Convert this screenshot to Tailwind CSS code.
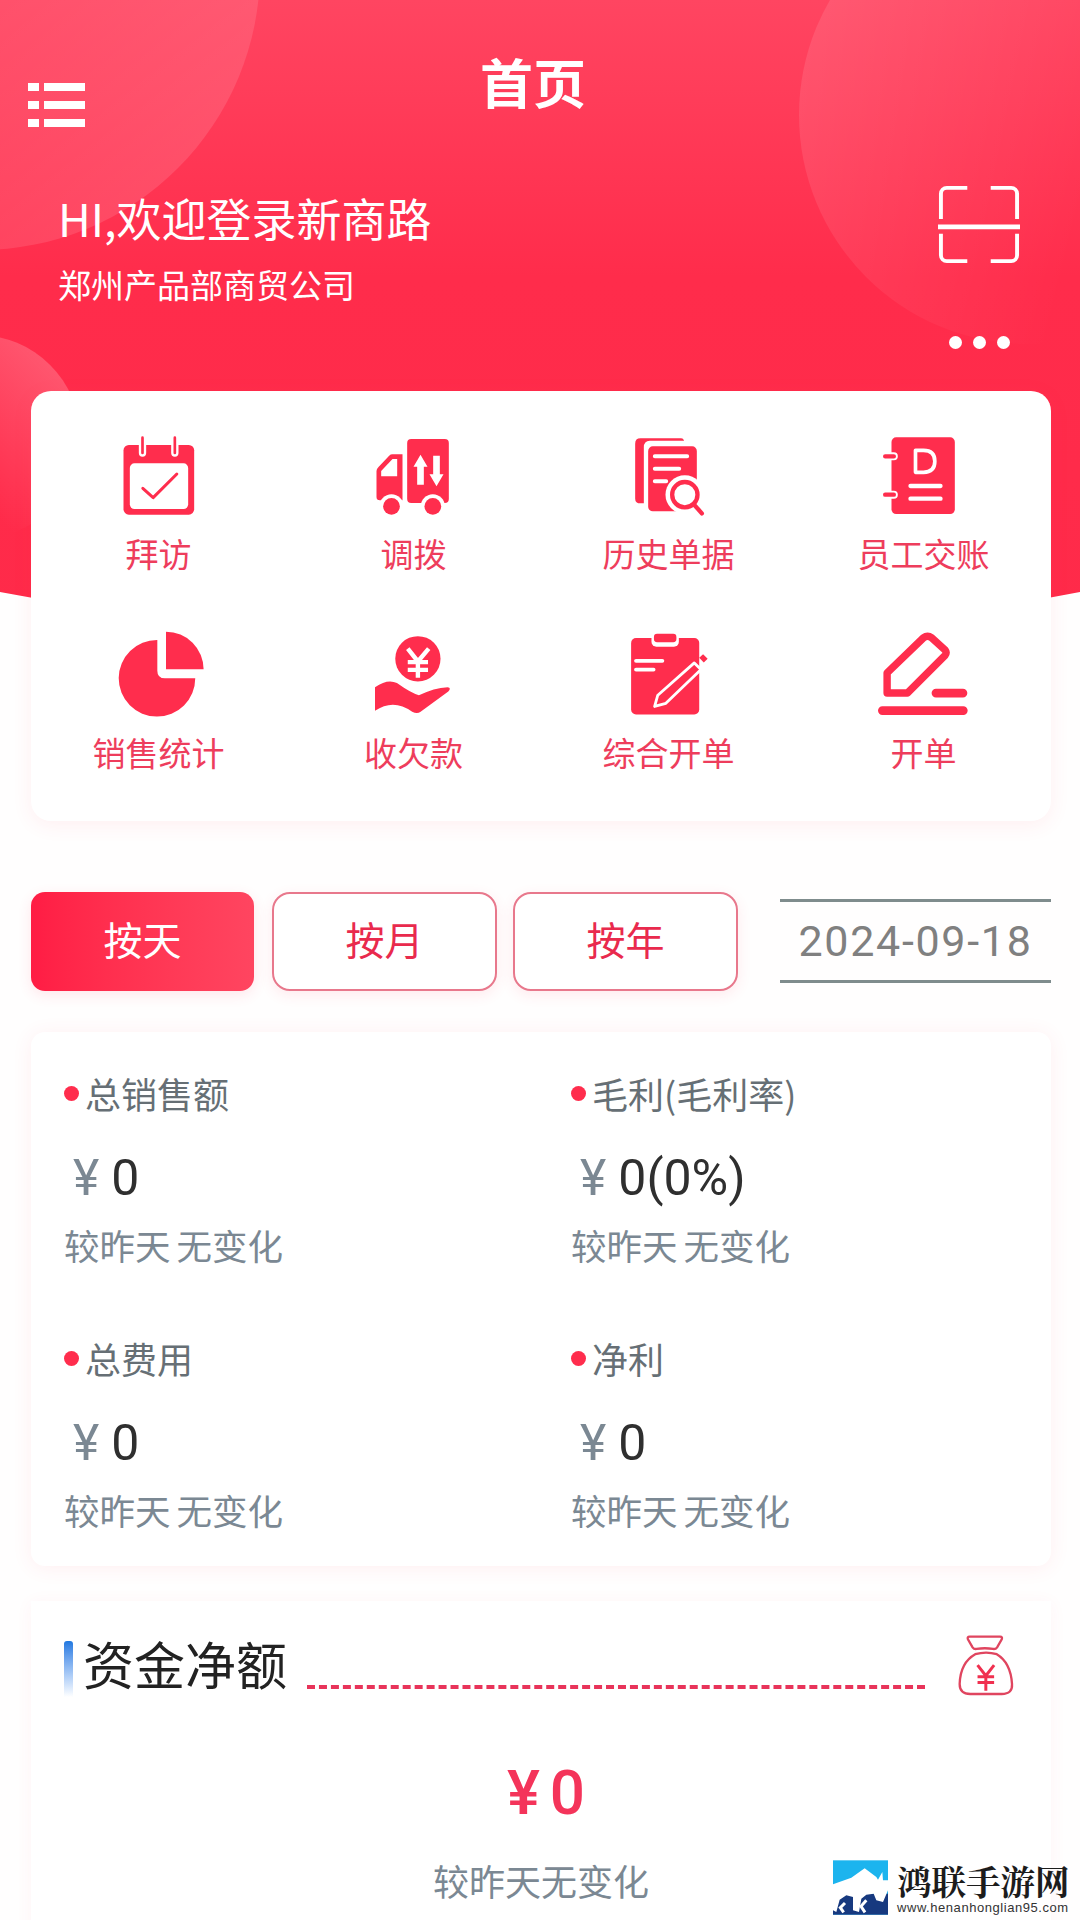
<!DOCTYPE html>
<html lang="zh-CN">
<head>
<meta charset="UTF-8" />
<title>首页</title>
<script src="https://cdn.jsdelivr.net/npm/@tailwindcss/browser@4"></script>
</head>
<body class="bg-white font-['Noto_Sans_CJK_SC','Noto_Sans',sans-serif]">
<div class="relative w-[1080px] h-[1920px] overflow-hidden bg-[#fffefe]">

  <!-- red header background with its soft circles -->
  <svg class="absolute left-0 top-0" width="1080" height="660" viewBox="0 0 1080 660">
    <defs>
      <linearGradient id="headerBg" x1="0" y1="0" x2="0" y2="1">
        <stop offset="0" stop-color="#ff4561" />
        <stop offset="0.42" stop-color="#ff2c4b" />
        <stop offset="1" stop-color="#ff2a49" />
      </linearGradient>
      <linearGradient id="circleLeft" x1="0" y1="0" x2="1" y2="1">
        <stop offset="0.2" stop-color="#fff" stop-opacity="0" />
        <stop offset="0.9" stop-color="#fff" stop-opacity="0.13" />
      </linearGradient>
      <linearGradient id="circleRight" x1="0" y1="0" x2="1" y2="0.25">
        <stop offset="0" stop-color="#fff" stop-opacity="0.12" />
        <stop offset="0.75" stop-color="#fff" stop-opacity="0" />
      </linearGradient>
      <linearGradient id="circleLow" x1="0" y1="1" x2="1" y2="0">
        <stop offset="0.35" stop-color="#fff" stop-opacity="0" />
        <stop offset="0.85" stop-color="#fff" stop-opacity="0.2" />
      </linearGradient>
      <clipPath id="headerClip"><path d="M0 0H1080V592Q540 696 0 592Z" /></clipPath>
    </defs>
    <g clip-path="url(#headerClip)">
      <rect width="1080" height="660" fill="url(#headerBg)" />
      <circle cx="-20" cy="-30" r="280" fill="url(#circleLeft)" />
      <circle cx="1028" cy="115" r="229" fill="url(#circleRight)" />
      <circle cx="-22" cy="437" r="102" fill="url(#circleLow)" />
    </g>
  </svg>

  <div class="relative flex flex-col">
    <!-- nav -->
    <div class="relative h-[180px]">
      <div class="absolute left-[28px] top-[83px] w-[57px] flex flex-col gap-[10px]">
        <div class="flex gap-[5px]"><div class="w-[11px] h-[8px] bg-white"></div><div class="flex-1 h-[8px] bg-white"></div></div>
        <div class="flex gap-[5px]"><div class="w-[11px] h-[8px] bg-white"></div><div class="flex-1 h-[8px] bg-white"></div></div>
        <div class="flex gap-[5px]"><div class="w-[11px] h-[8px] bg-white"></div><div class="flex-1 h-[8px] bg-white"></div></div>
      </div>
      <h1 class="pt-[46px] ml-[480px] text-[53px] leading-[70px] font-bold text-white">首页</h1>
    </div>

    <!-- welcome -->
    <div class="flex justify-between h-[211px] pl-[58px] pr-[60px]">
      <div class="text-white">
        <div class="text-[45px] leading-[60px] mt-[8px]">HI,欢迎登录新商路</div>
        <div class="text-[33px] leading-[44px] mt-[14px]">郑州产品部商贸公司</div>
      </div>
      <div class="flex flex-col items-center">
        <svg class="mt-[4px]" width="82" height="80" viewBox="0 0 84 80" fill="none" stroke="white" stroke-width="4">
          <path d="M30 3H9a6 6 0 0 0-6 6v26M54 3h21a6 6 0 0 1 6 6v26M3 50v22a6 6 0 0 0 6 6h21M81 50v22a6 6 0 0 1-6 6H54" />
          <path d="M0 43h84" stroke-width="5" />
        </svg>
        <div class="flex gap-[11px] mt-[72px]">
          <div class="w-[13px] h-[13px] rounded-full bg-white"></div>
          <div class="w-[13px] h-[13px] rounded-full bg-white"></div>
          <div class="w-[13px] h-[13px] rounded-full bg-white"></div>
        </div>
      </div>
    </div>

    <!-- shortcuts -->
    <div class="mx-[31px] w-[1020px] h-[430px] rounded-[20px] bg-white shadow-[0_4px_20px_rgba(255,60,90,0.08)] grid grid-cols-4 pt-[44px] text-[#ee3d5c] text-[33px] leading-[44px] text-center">
      <div class="flex flex-col items-center">
        <svg width="76" height="82" viewBox="185 46 225 246">
          <rect x="191" y="76" width="212" height="209" rx="16" fill="#ff2d4d" />
          <rect x="210" y="131" width="175" height="137" rx="14" fill="white" />
          <path d="M248 54v46M345 54v46" stroke="white" stroke-width="22" stroke-linecap="round" />
          <path d="M248 54v46M345 54v46" stroke="#ff2d4d" stroke-width="8" stroke-linecap="round" />
          <path d="M249 206l31 28 71-71" fill="none" stroke="#ff2d4d" stroke-width="9" stroke-linecap="round" stroke-linejoin="round" />
        </svg>
        <span class="mt-[14px]">拜访</span>
      </div>
      <div class="flex flex-col items-center">
        <svg class="ml-[-2px]" width="76" height="82" viewBox="945 46 225 246">
          <rect x="1040" y="58" width="125" height="192" rx="12" fill="#ff2d4d" />
          <path d="M1026 104h-30q-6 0-10 4l-32 34q-6 6-6 12v78q0 10 10 10h68z" fill="#ff2d4d" />
          <path d="M1010 118h-14l-34 36v16h48z" fill="white" />
          <circle cx="993" cy="260" r="36" fill="white" />
          <circle cx="1117" cy="260" r="36" fill="white" />
          <circle cx="993" cy="260" r="25" fill="#ff2d4d" />
          <circle cx="1117" cy="260" r="25" fill="#ff2d4d" />
          <path d="M1080 105l21 36h-11v54h-20v-54h-11zM1128 200l-21-36h11v-56h20v56h11z" fill="white" />
        </svg>
        <span class="mt-[14px]">调拨</span>
      </div>
      <div class="flex flex-col items-center">
        <svg class="ml-[-2px]" width="76" height="82" viewBox="212 46 225 246">
          <path d="M226 72q0-16 16-16h122q6 0 9 7h-103q-18 0-18 20v168h-10q-16 0-16-14z" fill="#ff2d4d" />
          <rect x="265" y="80" width="146" height="195" rx="14" fill="#ff2d4d" />
          <path d="M285 110h97M285 147h73M285 185h34" stroke="white" stroke-width="12" stroke-linecap="round" />
          <circle cx="375" cy="225" r="58" fill="white" />
          <circle cx="375" cy="225" r="38" fill="white" stroke="#ff2d4d" stroke-width="13" />
          <path d="M402 254l24 27" stroke="#ff2d4d" stroke-width="13" stroke-linecap="round" />
        </svg>
        <span class="mt-[14px]">历史单据</span>
      </div>
      <div class="flex flex-col items-center">
        <svg class="ml-[-10px]" width="76" height="82" viewBox="965 46 225 246">
          <rect x="995" y="53" width="190" height="230" rx="14" fill="#ff2d4d" />
          <path d="M976 110h26M976 225h26" stroke="white" stroke-width="24" stroke-linecap="round" />
          <path d="M976 110h26M976 225h26" stroke="#ff2d4d" stroke-width="13" stroke-linecap="round" />
          <path d="M1067 92v66h24q34 0 34-33t-34-33z" fill="none" stroke="white" stroke-width="11" stroke-linejoin="round" />
          <path d="M1052 199h90M1052 237h90" stroke="white" stroke-width="13" stroke-linecap="round" />
        </svg>
        <span class="mt-[14px]">员工交账</span>
      </div>

      <div class="flex flex-col items-center mt-[11px]">
        <svg class="ml-[6px] mt-[-3px]" width="87" height="87" viewBox="185 630 250 250">
          <path d="M298 656v88q0 22 22 22h87a110 110 0 1 1-109-110z" fill="#ff2d4d" />
          <path d="M323 632a108 108 0 0 1 108 108h-108z" fill="#ff2d4d" />
        </svg>
        <span class="mt-[12px]">销售统计</span>
      </div>
      <div class="flex flex-col items-center mt-[11px]">
        <svg class="ml-[-2px]" width="76" height="84" viewBox="945 640 225 246">
          <circle cx="1072" cy="712" r="67" fill="#ff2d4d" />
          <path d="M1042 682l30 38 32-38M1042 722h60M1042 745h60M1072 720v48" fill="none" stroke="white" stroke-width="13" />
          <path d="M945 796q38-26 65-12 42 30 65 36 45-22 85-24 12 2 2 13l-82 60q-10 7-25 0-55-40-110-3z" fill="#ff2d4d" />
        </svg>
        <span class="mt-[12px]">收欠款</span>
      </div>
      <div class="flex flex-col items-center mt-[11px]">
        <svg class="mt-[-3px]" width="79" height="87" viewBox="212 636 225 246">
          <rect x="218" y="655" width="194" height="218" rx="14" fill="#ff2d4d" />
          <rect x="276" y="636" width="78" height="44" rx="14" fill="white" />
          <rect x="283" y="643" width="64" height="24" rx="9" fill="#ff2d4d" />
          <path d="M232 720h75M232 745h50" stroke="white" stroke-width="11" stroke-linecap="round" />
          <path d="M398 726l19 19-100 96-32 9 9-32z" fill="#ff2d4d" stroke="white" stroke-width="8" stroke-linejoin="round" />
          <path d="M412 711l11-10 13 13-11 11z" fill="#ff2d4d" />
        </svg>
        <span class="mt-[12px]">综合开单</span>
      </div>
      <div class="flex flex-col items-center mt-[11px]">
        <svg class="ml-[-3px] mt-[-3px]" width="91" height="87" viewBox="955 636 270 258">
          <path d="M1093 656l-108 104v60h60l112-112q6-8 0-16l-40-36q-12-9-24 0z" fill="none" stroke="#ff2d4d" stroke-width="22" stroke-linejoin="round" />
          <path d="M1130 820h80M971 872h240" stroke="#ff2d4d" stroke-width="26" stroke-linecap="round" />
        </svg>
        <span class="mt-[12px]">开单</span>
      </div>
    </div>

    <!-- period tabs -->
    <div class="flex items-center mt-[70px] ml-[31px] h-[100px]">
      <div class="w-[223px] h-[99px] pb-[6px] rounded-[14px] bg-gradient-to-r from-[#ff1c44] to-[#ff4560] text-white text-[39px] flex items-center justify-center shadow-[0_4px_14px_rgba(255,60,90,0.12)]">按天</div>
      <div class="ml-[18px] w-[225px] h-[99px] pb-[6px] rounded-[18px] border-2 border-[#e8788c] bg-white text-[#e92a4d] text-[39px] flex items-center justify-center shadow-[0_4px_14px_rgba(255,60,90,0.1)]">按月</div>
      <div class="ml-[16px] w-[225px] h-[99px] pb-[6px] rounded-[18px] border-2 border-[#e8788c] bg-white text-[#e92a4d] text-[39px] flex items-center justify-center shadow-[0_4px_14px_rgba(255,60,90,0.1)]">按年</div>
      <div class="ml-[42px] w-[271px] h-[84px] border-y-[3px] border-[#7f8c8d] text-[#808080] text-[43px] tracking-[1.7px] font-['Roboto','Noto_Sans',sans-serif] flex items-center justify-center">2024-09-18</div>
    </div>

    <!-- stats -->
    <div class="mx-[31px] w-[1020px] mt-[41px] h-[534px] rounded-[14px] bg-white shadow-[0_2px_20px_rgba(255,60,90,0.08)] grid grid-cols-[507px_1fr] pl-[33px] pt-[36px] text-[#7b8893] text-[35.5px] [word-spacing:-2px]">
      <div class="h-[265px]">
        <div class="flex items-center text-[36px] leading-[50px] text-[#666f75]"><span class="w-[15px] h-[15px] rounded-full bg-[#ff2d4d] mr-[6px]"></span>总销售额</div>
        <div class="mt-[30px] h-[60px] leading-[60px] pl-[9px] font-['Roboto',sans-serif] text-[50px] text-[#2f2f2f]"><span class="text-[#7b8893] mr-[12px]">¥</span>0</div>
        <div class="mt-[13px] leading-[48px]">较昨天 无变化</div>
      </div>
      <div class="h-[265px]">
        <div class="flex items-center text-[36px] leading-[50px] text-[#666f75]"><span class="w-[15px] h-[15px] rounded-full bg-[#ff2d4d] mr-[6px]"></span>毛利(毛利率)</div>
        <div class="mt-[30px] h-[60px] leading-[60px] pl-[9px] font-['Roboto',sans-serif] text-[50px] text-[#2f2f2f]"><span class="text-[#7b8893] mr-[12px]">¥</span>0(0%)</div>
        <div class="mt-[13px] leading-[48px]">较昨天 无变化</div>
      </div>
      <div class="h-[265px]">
        <div class="flex items-center text-[36px] leading-[50px] text-[#666f75]"><span class="w-[15px] h-[15px] rounded-full bg-[#ff2d4d] mr-[6px]"></span>总费用</div>
        <div class="mt-[30px] h-[60px] leading-[60px] pl-[9px] font-['Roboto',sans-serif] text-[50px] text-[#2f2f2f]"><span class="text-[#7b8893] mr-[12px]">¥</span>0</div>
        <div class="mt-[13px] leading-[48px]">较昨天 无变化</div>
      </div>
      <div class="h-[265px]">
        <div class="flex items-center text-[36px] leading-[50px] text-[#666f75]"><span class="w-[15px] h-[15px] rounded-full bg-[#ff2d4d] mr-[6px]"></span>净利</div>
        <div class="mt-[30px] h-[60px] leading-[60px] pl-[9px] font-['Roboto',sans-serif] text-[50px] text-[#2f2f2f]"><span class="text-[#7b8893] mr-[12px]">¥</span>0</div>
        <div class="mt-[13px] leading-[48px]">较昨天 无变化</div>
      </div>
    </div>

    <!-- net funds -->
    <div class="mx-[31px] w-[1020px] mt-[35px] h-[340px] bg-white shadow-[0_2px_16px_rgba(255,60,90,0.05)] px-[33px]">
      <div class="flex items-start pt-[33px]">
        <div class="shrink-0 w-[9px] h-[56px] mt-[7px] rounded-t-[3px] bg-gradient-to-b from-[#1e78e0] to-white"></div>
        <div class="shrink-0 ml-[10px] w-[204px] whitespace-nowrap text-[51px] leading-[58px] text-[#222]">资金净额</div>
        <div class="shrink-0 ml-[20px] mt-[51px] w-[618px] border-t-[4px] border-dashed border-[#e8345a]"></div>
        <svg class="shrink-0 ml-[32px]" width="58" height="62" viewBox="50 40 175 185" fill="none" stroke="#e0455f" stroke-width="7">
          <path d="M95 47h85q8 0 5 8l-14 24q-4 6-12 5-25-4-50 0-8 1-12-5l-14-24q-3-8 5-8z" />
          <path d="M105 100Q60 125 58 190 58 220 90 220H185Q218 220 216 190 212 125 170 100 138 90 105 100z" />
          <path d="M112 133l25 32 25-32M112 168h50M112 185h50M137 165v45" stroke="#f0304f" stroke-width="9" />
        </svg>
      </div>
      <div class="mt-[63px] pl-[10px] text-center text-[#f4345a] text-[62px] leading-[66px] font-medium font-['Roboto',sans-serif]"><span class="mr-[10px]">¥</span>0</div>
      <div class="mt-[29px] text-center text-[36px] leading-[50px] text-[#7b8893]">较昨天无变化</div>
    </div>
  </div>

  <!-- watermark over the page -->
  <div class="absolute left-[833px] top-[1860px] w-[247px] h-[56px] flex">
    <svg width="55" height="55" viewBox="0 0 165 163">
      <rect width="165" height="163" fill="#1cb4ee" />
      <rect y="100" width="165" height="63" fill="#17397f" />
      <path d="M0 72L55 52 95 24 130 50 135 58 148 35 150 60 165 60V90L150 125 130 120 122 100 100 103 85 115 78 155 60 150 60 110 40 105 20 118 10 155 0 150Z" fill="white" />
      <path d="M36 128l-14 14 10 14M100 120l-16 18 12 18" fill="none" stroke="white" stroke-width="9" />
    </svg>
    <div class="ml-[9px] flex flex-col">
      <div class="text-[34.5px] leading-[40px] font-bold text-[#1c1c1c] font-['Noto_Serif_CJK_SC','Noto_Sans_CJK_SC',serif]">鸿联手游网</div>
      <div class="text-[13px] leading-[16px] text-[#333] font-['Liberation_Sans',sans-serif] tracking-[0.55px]">www.henanhonglian95.com</div>
    </div>
  </div>
</div>
</body>
</html>
